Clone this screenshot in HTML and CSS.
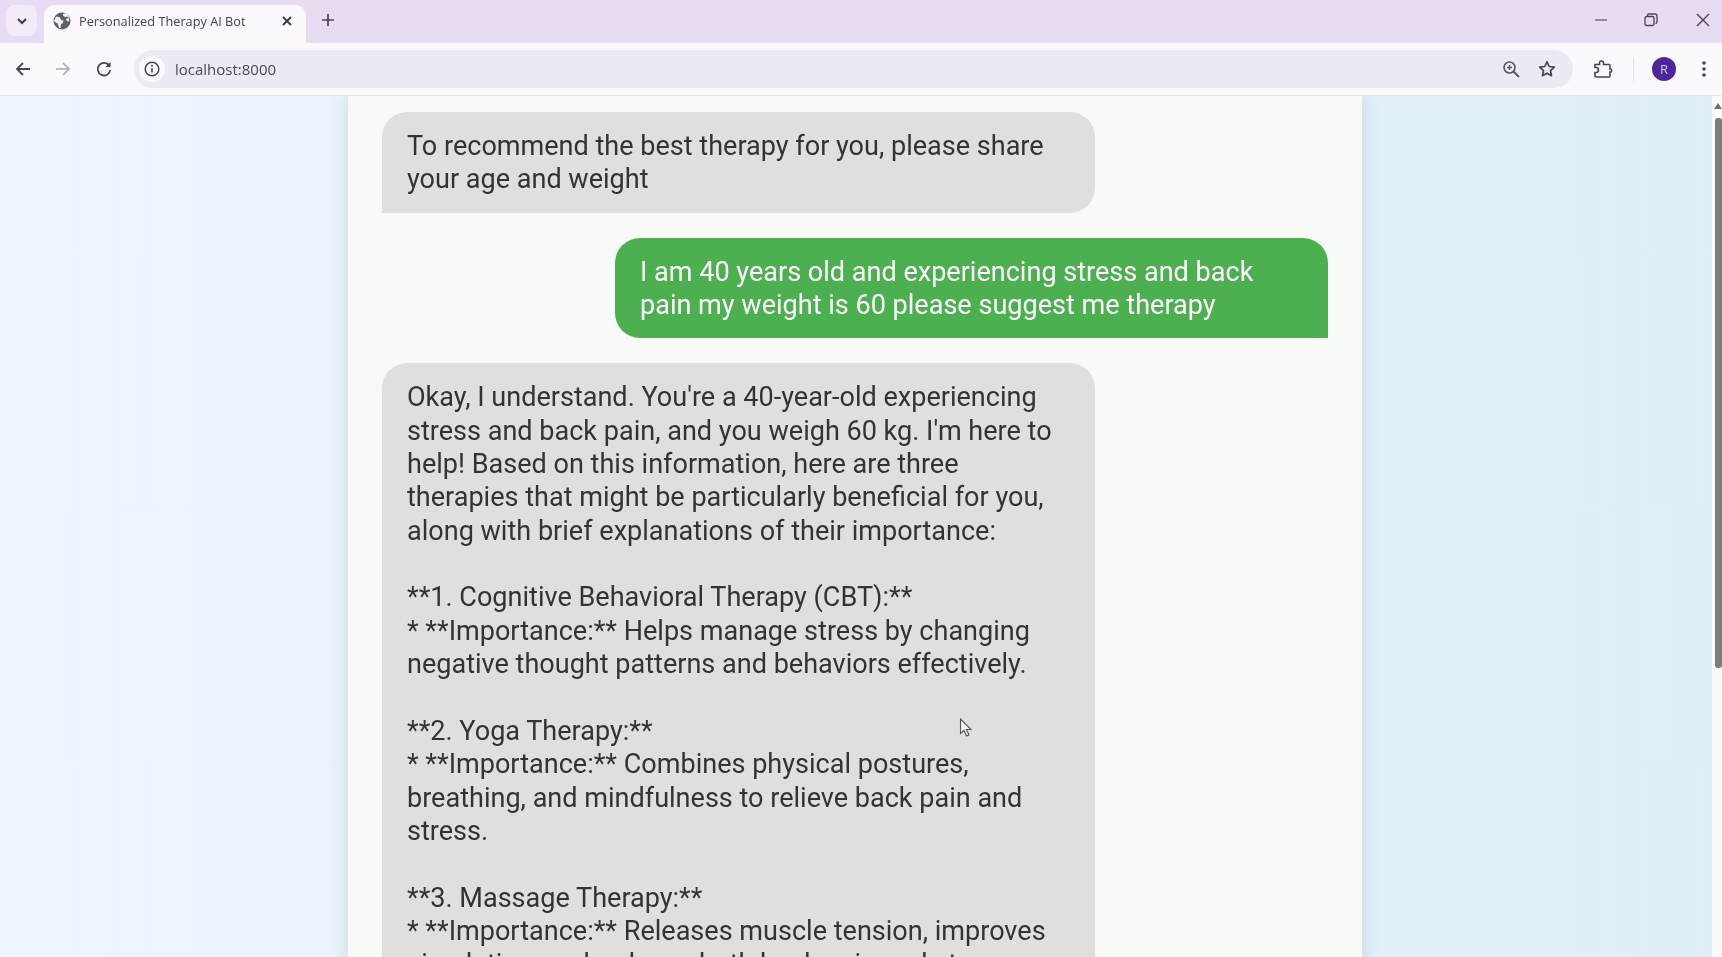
FILE: index.html
```html
<!DOCTYPE html>
<html lang="en">
<head>
    <meta charset="UTF-8">
    <meta name="viewport" content="width=device-width, initial-scale=1.0">
    <title>Personalized Therapy AI Bot</title>
    <link rel="stylesheet" href="styles.css">
</head>
<body>

    <div class="browser">
        <div class="tabstrip">
            <div class="tab-search">
                <svg width="14" height="14" viewBox="0 0 14 14"><path d="M3 5l4 4 4-4" fill="none" stroke="#3b3840" stroke-width="2"/></svg>
            </div>
            <div class="tab">
                <svg class="favicon" width="18" height="18" viewBox="0 0 18 18">
                    <circle cx="9" cy="9" r="8.5" fill="#5f6368"/>
                    <path d="M3 4.500l4 1 1 2.500 2.500.5-.5 2.500-2 1-.5 4-1.500-.2-1-4-4-2.500zM10.500 1.500l-.5 2 2 1.500 2.500-.5 1 1.500-2.500 1 1 2 2 .5-.2-5-2.500-3z" fill="#f7f2fb"/>
                </svg>
                <span class="tab-title">Personalized Therapy AI Bot</span>
                <svg class="tab-close" width="12" height="12" viewBox="0 0 12 12"><path d="M2 2l8 8M10 2l-8 8" stroke="#3b3840" stroke-width="1.800"/></svg>
            </div>
            <svg class="new-tab" width="14" height="14" viewBox="0 0 14 14"><path d="M7 1v12M1 7h12" stroke="#4a4650" stroke-width="1.700"/></svg>
            <div class="window-controls">
                <svg width="14" height="14" viewBox="0 0 14 14"><path d="M1 7h12" stroke="#77737c" stroke-width="1.500"/></svg>
                <svg width="14" height="14" viewBox="0 0 14 14"><rect x="1" y="3.500" width="9" height="9" rx="1.500" fill="none" stroke="#4a4650" stroke-width="1.300"/><path d="M3.500 3V2.500A1.500 1.500 0 0 1 5 1h6a2 2 0 0 1 2 2v6a1.500 1.500 0 0 1-1.500 1.500" fill="none" stroke="#4a4650" stroke-width="1.300"/></svg>
                <svg class="window-close" width="14" height="14" viewBox="0 0 14 14"><path d="M1 1l12 12M13 1L1 13" stroke="#4a4650" stroke-width="1.400"/></svg>
            </div>
        </div>

        <div class="toolbar">
            <svg class="nav-btn" width="18" height="18" viewBox="0 0 18 18"><path d="M16 9H3M9 3L3 9l6 6" fill="none" stroke="#48454e" stroke-width="1.800"/></svg>
            <svg class="nav-btn nav-forward" width="18" height="18" viewBox="0 0 18 18"><path d="M2 9h13M9 3l6 6-6 6" fill="none" stroke="#aaa6ae" stroke-width="1.500"/></svg>
            <svg class="nav-btn nav-reload" width="18" height="18" viewBox="0 0 18 18"><path d="M14.500 6A6.300 6.300 0 1 0 15.300 10" fill="none" stroke="#48454e" stroke-width="1.800"/><path d="M15.500 2v5h-5z" fill="#48454e"/></svg>
            <div class="omnibox">
                <div class="site-info">
                    <svg width="16" height="16" viewBox="0 0 16 16"><circle cx="8" cy="8" r="6.800" fill="none" stroke="#48454e" stroke-width="1.500"/><path d="M8 7v4.500" stroke="#48454e" stroke-width="1.600"/><circle cx="8" cy="4.800" r="1" fill="#48454e"/></svg>
                </div>
                <span class="url">localhost:8000</span>
                <div class="omnibox-actions">
                    <svg width="18" height="18" viewBox="0 0 18 18"><circle cx="7.500" cy="7.500" r="5.500" fill="none" stroke="#5a5660" stroke-width="1.600"/><path d="M11.500 11.500L17 17" stroke="#5a5660" stroke-width="1.900"/><path d="M7.500 5v5M5 7.500h5" stroke="#5a5660" stroke-width="1.300"/></svg>
                    <svg width="18" height="18" viewBox="0 0 18 18"><path d="M9 1.800l2.200 4.700 5.100.6-3.800 3.500 1 5.100L9 13.200l-4.500 2.500 1-5.100L1.700 7.100l5.100-.6z" fill="none" stroke="#48454e" stroke-width="1.700" stroke-linejoin="round"/></svg>
                </div>
            </div>
            <svg class="extensions" width="20" height="20" viewBox="0 0 20 20"><path d="M2 5.500h4.500V4a2 2 0 0 1 4 0v1.500H16a1 1 0 0 1 1 1v3.500h1a2 2 0 0 1 0 3h-1v4a1 1 0 0 1-1 1H3a1 1 0 0 1-1-1v-3.500h1a2.500 2.500 0 0 0 0-5H2z" fill="none" stroke="#48454e" stroke-width="1.600"/></svg>
            <div class="toolbar-sep"></div>
            <div class="avatar">R</div>
            <svg class="menu" width="6" height="18" viewBox="0 0 6 18"><circle cx="3" cy="3" r="1.800" fill="#48454e"/><circle cx="3" cy="9" r="1.800" fill="#48454e"/><circle cx="3" cy="15" r="1.800" fill="#48454e"/></svg>
        </div>

        <div class="page">
            <div class="viewport">
                <div class="container">
                    <div class="message bot">To recommend the best therapy for you, please share your age and weight</div>
                    <div class="message user">I am 40 years old and experiencing stress and back pain my weight is 60 please suggest me therapy</div>
                    <div class="message bot">Okay, I understand. You're a 40-year-old experiencing stress and back pain, and you weigh 60 kg. I'm here to help! Based on this information, here are three therapies that might be particularly beneficial for you, along with brief explanations of their importance:

**1. Cognitive Behavioral Therapy (CBT):**
* **Importance:** Helps manage stress by changing negative thought patterns and behaviors effectively.

**2. Yoga Therapy:**
* **Importance:** Combines physical postures, breathing, and mindfulness to relieve back pain and stress.

**3. Massage Therapy:**
* **Importance:** Releases muscle tension, improves circulation, and reduces both back pain and stress.</div>
                </div>
                <svg class="cursor" width="14" height="20" viewBox="0 0 14 20"><path d="M1.500 1v14.500l3.500-3 2.500 5.500 2.500-1-2.500-5.500h4.500z" fill="#f4f4f4" stroke="#55565a" stroke-width="1.100"/></svg>
            </div>
            <div class="scrollbar">
                <svg width="8" height="8" viewBox="0 0 8 8"><path d="M4 1l4 6H0z" fill="#6f6f6f"/></svg>
                <div class="thumb"></div>
            </div>
        </div>
    </div>

</body>
</html>
```

FILE: styles.css
```css
* { box-sizing: border-box; }

html, body {
    margin: 0;
    height: 100%;
    overflow: hidden;
}
body {
    font-family: Roboto, sans-serif;
    color: #333;
}
.browser {
    display: flex;
    flex-direction: column;
    height: 100vh;
    filter: blur(0.4px);
}

/* tab strip */
.tabstrip {
    display: flex;
    align-items: flex-end;
    height: 43px;
    padding-left: 6px;
    background: #e8dcf3;
}
.tab-search {
    display: flex;
    align-items: center;
    justify-content: center;
    align-self: flex-start;
    width: 31px;
    height: 31px;
    margin-top: 5px;
    border-radius: 9px;
    background: #f3ebf9;
}
.tab {
    display: flex;
    align-items: center;
    width: 262px;
    height: 38px;
    margin-left: 7px;
    padding: 0 13px 6px 9px;
    border-radius: 11px 11px 0 0;
    background: #fdf7fe;
}
.tab-title {
    flex: 1;
    margin-left: 8px;
    font-family: "Open Sans", sans-serif;
    font-size: 12.750px;
    color: #45424b;
    white-space: nowrap;
}
.new-tab {
    align-self: flex-start;
    margin: 13px 0 0 15px;
}
.window-controls {
    display: flex;
    align-self: flex-start;
    gap: 36px;
    margin: 13px 12px 0 auto;
}
.window-close { margin-left: 2px; }

/* toolbar */
.toolbar {
    display: flex;
    align-items: center;
    height: 53px;
    padding: 0 15px 1px 14px;
    background: #fdf7fe;
    border-bottom: 1px solid #e9e3eb;
}
.nav-btn { margin-right: 22px; }
.nav-forward { margin-right: 23px; }
.nav-reload { margin-right: 21px; }
.omnibox {
    display: flex;
    align-items: center;
    width: 1439px;
    height: 38px;
    padding: 0 17.500px 0 5px;
    border-radius: 19px;
    background: #efe9f3;
}
.site-info {
    display: flex;
    align-items: center;
    justify-content: center;
    width: 26px;
    height: 26px;
    border-radius: 50%;
    background: #fdf9fe;
}
.url {
    margin-left: 10px;
    font-family: "Open Sans", sans-serif;
    font-size: 15px;
    color: #4c4852;
}
.omnibox-actions {
    display: flex;
    gap: 18px;
    margin-left: auto;
}
.extensions { margin-left: 20px; }
.toolbar-sep {
    width: 1px;
    height: 24px;
    margin-left: 20px;
    background: #e6dfea;
}
.avatar {
    display: flex;
    align-items: center;
    justify-content: center;
    width: 24px;
    height: 24px;
    margin-left: 18px;
    border-radius: 50%;
    background: #4a289c;
    color: #d3c8ee;
    font-family: "Open Sans", sans-serif;
    font-size: 13px;
}
.menu { margin-left: 25px; }

/* page */
.page {
    display: flex;
    flex: 1;
    min-height: 0;
    background: linear-gradient(to right, #ecf5fc, #dff0f6);
}
.viewport {
    position: relative;
    flex: 1;
    padding-right: 2px;
    overflow: hidden;
}
.container {
    display: flex;
    flex-direction: column;
    gap: 25px;
    width: 1014px;
    margin: 0 auto;
    padding: 16px 34px;
    background: #f8faf7;
    box-shadow: 0 0 20px rgba(0, 0, 0, 0.12);
}
.message {
    width: 713px;
    padding: 18px 25px 16px;
    font-size: 27.050px;
    line-height: 33.350px;
    white-space: pre-line;
}
.bot {
    border-radius: 25px 25px 25px 0;
    background: #dfe0de;
    color: #333;
}
.user {
    align-self: flex-end;
    border-radius: 25px 25px 0 25px;
    background: #4caf50;
    color: #fff;
}
.cursor {
    position: absolute;
    top: 622px;
    left: 959px;
}

/* scrollbar */
.scrollbar {
    display: flex;
    flex-direction: column;
    align-items: flex-end;
    width: 10px;
    padding-top: 6px;
    background: #fafbf9;
}
.thumb {
    width: 7px;
    height: 550px;
    margin-top: 8px;
    border-radius: 3px;
    background: #7d7d7d;
}
```
